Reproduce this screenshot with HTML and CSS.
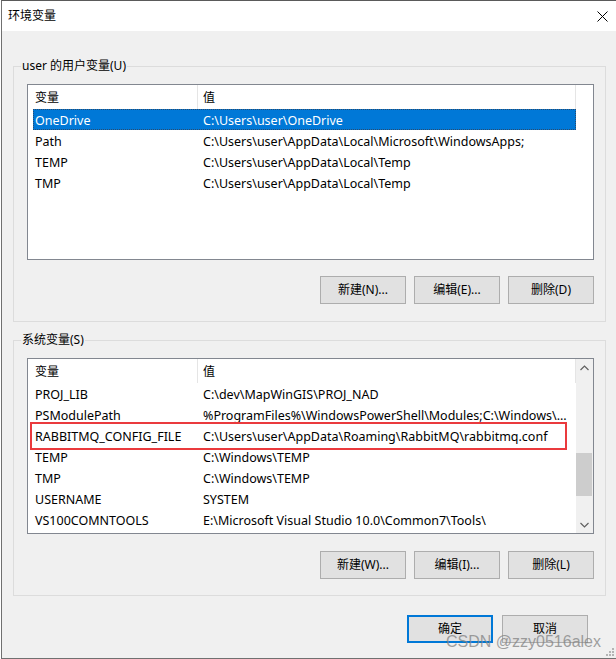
FILE: index.html
```html
<!DOCTYPE html>
<html lang="zh-CN">
<head>
    <meta charset="UTF-8">
    <meta name="viewport" content="width=device-width, initial-scale=1.0">
    <title>环境变量</title>
    <link rel="stylesheet" href="styles.css">
</head>
<body>
    <div class="window">
        <div class="titlebar">
            <span class="title">环境变量</span>
            <svg class="close" width="11" height="11" viewBox="0 0 11 11">
                <path d="M0.5 0.5 L10.5 10.5 M10.5 0.5 L0.5 10.5" stroke="#000" stroke-width="1" fill="none"/>
            </svg>
        </div>

        <div class="client">
            <fieldset class="group">
                <legend>user 的用户变量(U)</legend>
                <div class="list">
                    <div class="list-main">
                        <div class="list-head">
                            <div class="head-name">变量</div>
                            <div class="head-value">值</div>
                        </div>
                        <div class="row selected">
                            <div class="cell-name">OneDrive</div>
                            <div class="cell-value">C:\Users\user\OneDrive</div>
                        </div>
                        <div class="row">
                            <div class="cell-name">Path</div>
                            <div class="cell-value">C:\Users\user\AppData\Local\Microsoft\WindowsApps;</div>
                        </div>
                        <div class="row">
                            <div class="cell-name">TEMP</div>
                            <div class="cell-value">C:\Users\user\AppData\Local\Temp</div>
                        </div>
                        <div class="row">
                            <div class="cell-name">TMP</div>
                            <div class="cell-value">C:\Users\user\AppData\Local\Temp</div>
                        </div>
                    </div>
                </div>
                <div class="buttons">
                    <button class="btn">新建(N)...</button>
                    <button class="btn">编辑(E)...</button>
                    <button class="btn">删除(D)</button>
                </div>
            </fieldset>

            <fieldset class="group group-system">
                <legend>系统变量(S)</legend>
                <div class="list">
                    <div class="list-main">
                        <div class="list-head">
                            <div class="head-name">变量</div>
                            <div class="head-value">值</div>
                        </div>
                        <div class="row">
                            <div class="cell-name">PROJ_LIB</div>
                            <div class="cell-value">C:\dev\MapWinGIS\PROJ_NAD</div>
                        </div>
                        <div class="row">
                            <div class="cell-name">PSModulePath</div>
                            <div class="cell-value">%ProgramFiles%\WindowsPowerShell\Modules;C:\Windows\...</div>
                        </div>
                        <div class="row">
                            <div class="cell-name">RABBITMQ_CONFIG_FILE</div>
                            <div class="cell-value">C:\Users\user\AppData\Roaming\RabbitMQ\rabbitmq.conf</div>
                        </div>
                        <div class="row">
                            <div class="cell-name">TEMP</div>
                            <div class="cell-value">C:\Windows\TEMP</div>
                        </div>
                        <div class="row">
                            <div class="cell-name">TMP</div>
                            <div class="cell-value">C:\Windows\TEMP</div>
                        </div>
                        <div class="row">
                            <div class="cell-name">USERNAME</div>
                            <div class="cell-value">SYSTEM</div>
                        </div>
                        <div class="row">
                            <div class="cell-name">VS100COMNTOOLS</div>
                            <div class="cell-value">E:\Microsoft Visual Studio 10.0\Common7\Tools\</div>
                        </div>
                    </div>
                    <div class="scrollbar">
                        <div class="arrow">
                            <svg width="9" height="6" viewBox="0 0 9 6"><path d="M0.5 5 L4.5 1 L8.5 5" stroke="#606060" stroke-width="1.2" fill="none"/></svg>
                        </div>
                        <div class="track"><div class="thumb"></div></div>
                        <div class="arrow">
                            <svg width="9" height="6" viewBox="0 0 9 6"><path d="M0.5 1 L4.5 5 L8.5 1" stroke="#606060" stroke-width="1.2" fill="none"/></svg>
                        </div>
                    </div>
                    <!-- annotation box around the highlighted row -->
                    <div class="mark"></div>
                </div>
                <div class="buttons">
                    <button class="btn">新建(W)...</button>
                    <button class="btn">编辑(I)...</button>
                    <button class="btn">删除(L)</button>
                </div>
            </fieldset>

            <div class="footer">
                <button class="btn btn-default">确定</button>
                <button class="btn">取消</button>
            </div>
        </div>

        <div class="watermark">CSDN @zzy0516alex</div>
        <svg class="grip" width="8" height="8" viewBox="0 0 8 8">
            <rect x="6" y="0" width="2" height="2" fill="#b4b4b4"/>
            <rect x="3" y="3" width="2" height="2" fill="#b4b4b4"/>
            <rect x="6" y="3" width="2" height="2" fill="#b4b4b4"/>
            <rect x="0" y="6" width="2" height="2" fill="#b4b4b4"/>
            <rect x="3" y="6" width="2" height="2" fill="#b4b4b4"/>
            <rect x="6" y="6" width="2" height="2" fill="#b4b4b4"/>
        </svg>
    </div>
</body>
</html>
```

FILE: styles.css
```css
* {
    box-sizing: border-box;
}
body {
    margin: 0;
    background: #fff;
    font-family: "Noto Sans", "Noto Sans CJK SC", sans-serif;
    font-size: 12px;
    color: #000;
}
.window {
    position: relative;
    margin-left: 1px;
    width: 615px;
    height: 659px;
    border-top: 1px solid #5a5a5a;
    border-left: 1px solid #707070;
    border-bottom: 1px solid #707070;
    display: flex;
    flex-direction: column;
    overflow: hidden;
}
.titlebar {
    height: 30px;
    background: #fff;
    display: flex;
    align-items: center;
    justify-content: space-between;
    padding: 0 8px 0 6px;
}
.title {
    font-size: 12px;
    line-height: 16px;
}
.close {
    display: block;
}
.client {
    flex: 1;
    background: #f0f0f0;
    padding: 0 10px 0 11px;
}
.group {
    margin: 27px 0 0;
    border: 1px solid #dcdcdc;
    padding: 10px 11px 17px 13px;
    min-width: 0;
}
.group-system {
    margin-top: 10px;
    padding-bottom: 16px;
}
legend {
    margin-left: -6px;
    padding: 0 1px;
    line-height: 16px;
}
.list {
    position: relative;
    display: flex;
    height: 176px;
    border: 1px solid #828790;
    background: #fff;
}
.list-main {
    flex: 1;
    min-width: 0;
    overflow: hidden;
}
.list-head {
    display: flex;
    height: 24px;
    align-items: stretch;
}
.head-name {
    width: 170px;
    padding-left: 7px;
    border-right: 1px solid #e5e5e5;
    display: flex;
    align-items: center;
}
.head-value {
    width: 378px;
    padding-left: 5px;
    border-right: 1px solid #e5e5e5;
    display: flex;
    align-items: center;
}
.row {
    display: flex;
    align-items: center;
    height: 21px;
    width: 543px;
    margin-left: 5px;
    padding-top: 1px;
    font-size: 12.5px;
    white-space: nowrap;
}
.cell-name {
    width: 164px;
    padding-left: 2px;
    overflow: hidden;
}
.cell-value {
    flex: 1;
    padding-left: 6px;
    overflow: hidden;
}
.row.selected {
    background: #0078d7;
    color: #fff;
    outline: 1px dotted #2c4a6b;
    outline-offset: -1px;
}
.scrollbar {
    width: 17px;
    background: #f0f0f0;
    display: flex;
    flex-direction: column;
}
.arrow {
    height: 17px;
    display: flex;
    align-items: center;
    justify-content: center;
}
.track {
    flex: 1;
}
.thumb {
    margin: 77px 1px 0 0;
    height: 43px;
    background: #cdcdcd;
}
.mark {
    position: absolute;
    left: 2px;
    top: 63px;
    width: 537px;
    height: 28px;
    border: 2px solid #ea3a3d;
}
.buttons {
    display: flex;
    justify-content: flex-end;
    gap: 8px;
    margin-top: 16px;
}
.group-system .buttons {
    margin-top: 17px;
}
.btn {
    width: 86px;
    height: 28px;
    background: #e1e1e1;
    border: 1px solid #adadad;
    font-family: inherit;
    font-size: 12px;
    color: #000;
    padding: 0 0 2px;
}
.btn-default {
    border: 2px solid #0078d7;
}
.footer {
    display: flex;
    justify-content: flex-end;
    gap: 9px;
    padding: 19px 18px 0 0;
}
.watermark {
    position: absolute;
    right: 15px;
    bottom: 7px;
    font-family: "Liberation Sans", Arial, sans-serif;
    font-size: 16px;
    color: rgba(130, 130, 130, 0.75);
}
.grip {
    position: absolute;
    right: 2px;
    bottom: 2px;
}
```
